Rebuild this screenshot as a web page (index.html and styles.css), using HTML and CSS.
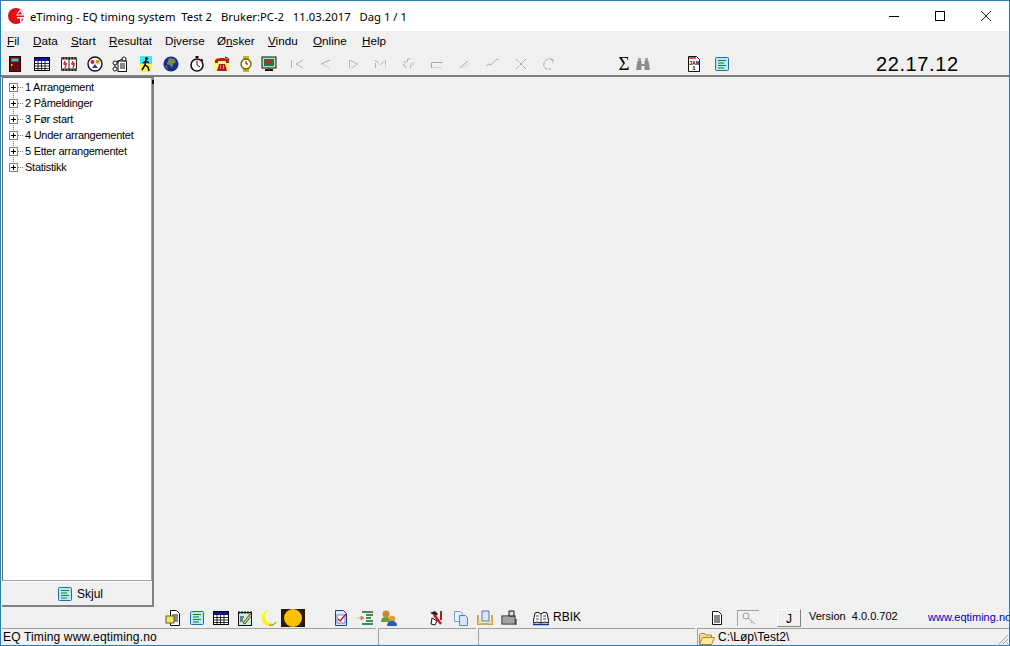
FILE: index.html
```html
<!DOCTYPE html>
<html lang="no">
<head>
<meta charset="utf-8">
<title>eTiming</title>
<link rel="stylesheet" href="styles.css">
</head>
<body>
<svg class="defs" width="0" height="0">
  <defs>
    <symbol id="doc-list" viewBox="0 0 16 16"><rect x="1.500" y="1.500" width="13" height="13" rx="1" fill="#bfe6f5" stroke="#1c6fa8"/><path d="M4 4.500h8M4 7h6M4 9.500h8M4 12h6" stroke="#0a8a2a" stroke-width="1.200"/></symbol>
    <symbol id="table" viewBox="0 0 16 16"><rect x=".5" y="1.500" width="15" height="13" fill="#fff" stroke="#000"/><rect x="1" y="2" width="14" height="3" fill="#0a1a8c"/><path d="M1 7.500h14M1 10h14M1 12.500h14M4 5v9M7.500 5v9M11 5v9" stroke="#000" stroke-width=".8"/></symbol>
  </defs>
</svg>
<div class="window">
  <header class="titlebar">
    <svg class="logo" width="16" height="16" viewBox="0 0 16 16"><circle cx="8" cy="8" r="8" fill="#e0101a"/><path d="M8 7.500L12 1.500A8 8 0 0 1 16 7.500z" fill="#fff"/><path d="M9 6.500L12.500 3.500A6 6 0 0 1 14 6.500z" fill="#e0101a"/><path d="M9 9h7v1.500h-2.500V14H12v-3.500H9z" fill="#fff"/></svg>
    <span class="title-text">eTiming - EQ timing system&nbsp; Test 2&nbsp; &nbsp;Bruker:PC-2&nbsp; &nbsp;11.03.2017&nbsp; &nbsp;Dag 1 / 1</span>
    <div class="win-controls">
      <svg width="46" height="30" viewBox="0 0 46 30"><path d="M18 15.500h10" stroke="#000"/></svg>
      <svg width="46" height="30" viewBox="0 0 46 30"><rect x="18.500" y="10.500" width="9" height="9" fill="none" stroke="#000"/></svg>
      <svg width="46" height="30" viewBox="0 0 46 30"><path d="M18 10l10 10M28 10l-10 10" stroke="#222" fill="none"/></svg>
    </div>
  </header>

  <nav class="menubar">
    <span class="m-fil"><u>F</u>il</span>
    <span class="m-data"><u>D</u>ata</span>
    <span class="m-start"><u>S</u>tart</span>
    <span class="m-res"><u>R</u>esultat</span>
    <span class="m-div">D<u>i</u>verse</span>
    <span class="m-ons">Ø<u>n</u>sker</span>
    <span class="m-vin"><u>V</u>indu</span>
    <span class="m-onl"><u>O</u>nline</span>
    <span class="m-hel"><u>H</u>elp</span>
  </nav>

  <div class="toolbar">
    <div class="tool-group main-tools">
      <svg class="ico wide-next" viewBox="0 0 16 16"><rect x="2" y="0" width="12" height="16" fill="#6b0a12"/><rect x="2.500" y=".5" width="11" height="15" fill="none" stroke="#2a0408"/><rect x="4.500" y="2.500" width="7" height="3" fill="#35c8c8"/><rect x="4" y="8" width="1.500" height="2" fill="#d8c040"/></svg>
      <svg class="ico wide-next" viewBox="0 0 16 16"><use href="#table"/></svg>
      <svg class="ico" viewBox="0 0 16 16"><rect y="1" width="16" height="14" fill="#fff"/><rect y="1" width="16" height="2.500" fill="#222"/><rect y="12.500" width="16" height="2.500" fill="#222"/><path d="M0 2h16M0 14h16" stroke="#fff" stroke-width=".7" stroke-dasharray="1.500 1.500"/><rect x="0" y="3" width="1" height="10" fill="#222"/><rect x="7.500" y="3" width="1" height="10" fill="#222"/><rect x="15" y="3" width="1" height="10" fill="#222"/><path d="M4 5l-1 3 2 1-1 3M4 7l2 1M4 7l-2 1M12 5l-1 3 2 1-1 3M12 7l2 1M12 7l-2 1" stroke="#d8141c" stroke-width="1.300" fill="none"/></svg>
      <svg class="ico" viewBox="0 0 16 16"><circle cx="8" cy="8" r="7" fill="#fff" stroke="#111" stroke-width="1.400"/><circle cx="5.500" cy="6" r="2" fill="#c8202c"/><rect x="9" y="4" width="3.500" height="3.500" fill="#b89a20"/><path d="M8 8l3 4H5z" fill="#2a3ca8"/></svg>
      <svg class="ico" viewBox="0 0 16 16"><rect x="6" y="5" width="8.500" height="10.500" fill="#fff" stroke="#111"/><path d="M8 8h5M8 10h5M8 12h5" stroke="#111"/><circle cx="12" cy="3" r="2" fill="#fff" stroke="#111"/><circle cx="3" cy="7" r="2" fill="#fff" stroke="#111"/><circle cx="3" cy="13" r="2" fill="#fff" stroke="#111"/><path d="M4.500 6l6-3M3 9v2" stroke="#111"/></svg>
      <svg class="ico narrow runner" viewBox="0 0 12 16"><rect width="12" height="8" fill="#3fe8ee"/><rect y="8" width="12" height="8" fill="#fff34a"/><circle cx="6.500" cy="2.500" r="1.500" fill="#000"/><path d="M6 4l-1 5-3 5M5 9l3 2 1 4M6 5l3 2M6 5L3 7" stroke="#000" stroke-width="1.500" fill="none"/></svg>
      <svg class="ico" viewBox="0 0 16 16"><circle cx="8" cy="8" r="7.600" fill="#1a2f96"/><path d="M6 2l5 1 2 3-3 2-1 4-2-3-3-1 1-3z" fill="#7c8a48"/><path d="M2 9l2 1 1 3-2-1z" fill="#6a7c40"/></svg>
      <svg class="ico" viewBox="0 0 16 16"><circle cx="8" cy="9" r="6" fill="#fff" stroke="#111" stroke-width="1.600"/><rect x="6.500" y="0" width="3" height="2" fill="#111"/><path d="M12 3l2 2" stroke="#111" stroke-width="1.400"/><path d="M8 9V4.500" stroke="#d8141c" stroke-width="1.200"/><path d="M8 9l3 2" stroke="#111"/></svg>
      <svg class="ico" viewBox="0 0 16 16"><rect y="2" width="16" height="13" fill="#fff46a" opacity=".8"/><path d="M1 5q0-3 7-3t7 3v2h-3V5H4v2H1z" fill="#b01a20"/><path d="M3 15l2-7h6l2 7z" fill="#b01a20"/><path d="M6 10h1M9 10h1M6 12h1M9 12h1" stroke="#fff"/><path d="M11 1q3 0 4 3" stroke="#222" fill="none"/></svg>
      <svg class="ico narrow" viewBox="0 0 12 16"><rect x="3" y="0" width="6" height="3" fill="#c8b020"/><rect x="3" y="13" width="6" height="3" fill="#c8b020"/><circle cx="6" cy="8" r="5" fill="#fffbd0" stroke="#6a5c10" stroke-width="1.300"/><path d="M6 5v3h2" stroke="#222" fill="none"/></svg>
      <svg class="ico" viewBox="0 0 16 16"><rect x="1" y="1" width="14" height="11" fill="#c4d8c4" stroke="#111"/><rect x="3" y="3" width="10" height="7" fill="#1a7a3a"/><rect x="5" y="4.500" width="5" height="3" fill="#c8242c"/><path d="M4 14h8" stroke="#111" stroke-width="2"/><path d="M7 12h2v2H7z" fill="#444"/></svg>
    </div>
    <div class="tool-group off-tools">
      <svg class="ico" viewBox="0 0 16 16"><path d="M2.500 12V4.500h1M14 4L7 8l7 4" stroke="#b4b4b4" fill="none"/></svg>
      <svg class="ico" viewBox="0 0 16 16"><path d="M13 4L4 8" stroke="#a4a4a4" fill="none"/><path d="M4 8l9 4" stroke="#d0d0d0" fill="none"/></svg>
      <svg class="ico" viewBox="0 0 16 16"><path d="M4.500 12V4l8 4-6 4" stroke="#b4b4b4" fill="none"/></svg>
      <svg class="ico" viewBox="0 0 16 16"><path d="M2.500 12V4.500l5 4 5-4v7" stroke="#b0b0b0" fill="none" stroke-dasharray="5 1.500"/></svg>
      <svg class="ico" viewBox="0 0 16 16"><path d="M6.500 3v3H3v5h3M6.500 3h3M13 6v1M9.500 12V8h4" stroke="#b0b0b0" fill="none" stroke-dasharray="3 1"/></svg>
      <svg class="ico" viewBox="0 0 16 16"><path d="M2.500 12V6.500h11" stroke="#a4a4a4" fill="none"/><path d="M3 11.500h10" stroke="#d4d4d4"/></svg>
      <svg class="ico" viewBox="0 0 16 16"><path d="M3 12l8-7" stroke="#a8a8a8" fill="none"/><path d="M6 12l7-5" stroke="#d4d4d4" fill="none"/></svg>
      <svg class="ico" viewBox="0 0 16 16"><path d="M1 10l3-2 2 1 6-6 2 1" stroke="#b0b0b0" fill="none"/></svg>
      <svg class="ico" viewBox="0 0 16 16"><path d="M3 3l10 10M13 3L3 13" stroke="#a8a8a8" fill="none" stroke-dasharray="4 1"/></svg>
      <svg class="ico" viewBox="0 0 16 16"><path d="M12 4Q7 1 4 5t1 8h5M10 3l3 2-2 2" stroke="#a8a8a8" fill="none" stroke-dasharray="4 1"/></svg>
    </div>
    <div class="tool-group find-tools">
      <span class="sigma">Σ</span>
      <svg class="ico" viewBox="0 0 16 16"><path d="M1 14l1.500-9h4v3h3V5h4l1.500 9H9.500V10h-3v4z" fill="#8c8c8c"/><rect x="3" y="2" width="3" height="3" fill="#a0a0a0"/><rect x="10" y="2" width="3" height="3" fill="#a0a0a0"/></svg>
    </div>
    <div class="tool-group doc-tools">
      <svg class="ico" viewBox="0 0 16 16"><path d="M2.500.5h8l3 3v12h-11z" fill="#fff" stroke="#111"/><path d="M3 2h7" stroke="#d8141c" stroke-width="1.500"/><text class="cal-text" x="8" y="8.500" text-anchor="middle">JAN</text><text class="cal-text" x="8" y="14" text-anchor="middle">1</text></svg>
      <svg class="ico" viewBox="0 0 16 16"><use href="#doc-list"/></svg>
    </div>
    <span class="clock">22.17.12</span>
  </div>

  <main class="workspace">
    <aside class="side-panel">
      <ul class="tree">
        <li><svg class="tree-box" viewBox="0 0 9 9"><rect x=".5" y=".5" width="8" height="8" fill="#fff" stroke="#808080"/><path d="M2 4.500h5M4.500 2v5" stroke="#000"/></svg><span>1 Arrangement</span></li>
        <li><svg class="tree-box" viewBox="0 0 9 9"><rect x=".5" y=".5" width="8" height="8" fill="#fff" stroke="#808080"/><path d="M2 4.500h5M4.500 2v5" stroke="#000"/></svg><span>2 Påmeldinger</span></li>
        <li><svg class="tree-box" viewBox="0 0 9 9"><rect x=".5" y=".5" width="8" height="8" fill="#fff" stroke="#808080"/><path d="M2 4.500h5M4.500 2v5" stroke="#000"/></svg><span>3 Før start</span></li>
        <li><svg class="tree-box" viewBox="0 0 9 9"><rect x=".5" y=".5" width="8" height="8" fill="#fff" stroke="#808080"/><path d="M2 4.500h5M4.500 2v5" stroke="#000"/></svg><span>4 Under arrangementet</span></li>
        <li><svg class="tree-box" viewBox="0 0 9 9"><rect x=".5" y=".5" width="8" height="8" fill="#fff" stroke="#808080"/><path d="M2 4.500h5M4.500 2v5" stroke="#000"/></svg><span>5 Etter arrangementet</span></li>
        <li class="last"><svg class="tree-box" viewBox="0 0 9 9"><rect x=".5" y=".5" width="8" height="8" fill="#fff" stroke="#808080"/><path d="M2 4.500h5M4.500 2v5" stroke="#000"/></svg><span>Statistikk</span></li>
      </ul>
      <div class="hide-btn"><svg class="ico" viewBox="0 0 16 16"><use href="#doc-list"/></svg><span>Skjul</span></div>
    </aside>
    <div class="content"></div>
  </main>

  <div class="bottombar">
    <div class="tool-group b1">
      <svg class="ico" viewBox="0 0 16 16"><path d="M5.500.5h6l3 3v12h-9z" fill="#fff" stroke="#111"/><path d="M7 5h6M7 7h6M7 9h6M7 11h6" stroke="#111"/><rect x="1" y="6" width="8" height="7" fill="#f4e46a" stroke="#6a5c10"/></svg>
      <svg class="ico" viewBox="0 0 16 16"><use href="#doc-list"/></svg>
      <svg class="ico" viewBox="0 0 16 16"><use href="#table"/></svg>
      <svg class="ico" viewBox="0 0 16 16"><rect x="1.500" y="2.500" width="13" height="13" fill="#bff0ee" stroke="#111"/><path d="M2 1v3M5 1v3M8 1v3M11 1v3M14 1v3" stroke="#111"/><path d="M3 7h4M3 9h3M3 11h3" stroke="#111"/><path d="M6 13l7-9 2 1-7 9z" fill="#e8d040" stroke="#111" stroke-width=".7"/></svg>
      <svg class="ico" viewBox="0 0 16 16"><path d="M8 0a8 8 0 1 0 8 11q-2 3-6 2Q4 12 4 7q0-4 4-7z" fill="#fdf21a"/><path d="M8 15q5 1 7-3" stroke="#777" fill="none"/></svg>
      <svg class="ico sun" viewBox="0 0 24 18"><rect width="24" height="18" fill="#2a1a08"/><circle cx="12" cy="9" r="9" fill="#fcc000"/></svg>
    </div>
    <div class="tool-group b2">
      <svg class="ico" viewBox="0 0 16 16"><path d="M2.500.5h8l3 3v12h-11z" fill="#e0e8f8" stroke="#1a3c9c"/><rect x="4" y="5" width="8" height="8" fill="#fff" stroke="#1a3c9c" stroke-width=".6"/><path d="M5 9l2 2 6-7" stroke="#d8141c" stroke-width="1.500" fill="none"/></svg>
      <svg class="ico" viewBox="0 0 16 16"><path d="M5 2h11M9 5h7M9 8h5M9 11h7M5 14h11" stroke="#0d6a1a" stroke-width="1.500"/><path d="M0 8h4V6l3 2-3 2V8" fill="#e08030" stroke="#c05810" stroke-width=".5"/></svg>
      <svg class="ico" viewBox="0 0 16 16"><circle cx="5" cy="4" r="3.500" fill="#c88a30"/><path d="M0 12q0-5 5-5t5 5z" fill="#6a9c30"/><circle cx="11" cy="9" r="3.200" fill="#e09a40"/><path d="M6 16q0-5 5-5t5 5z" fill="#2a5cc0"/></svg>
    </div>
    <div class="tool-group b3">
      <svg class="ico" viewBox="0 0 16 16"><path d="M1 3l5-2 3 3-2 2z" fill="#222"/><path d="M5 5l7 9" stroke="#d8141c" stroke-width="2.500"/><path d="M3 8l-1 6 4 1 2-4z" fill="#fff" stroke="#111"/><path d="M12 1v9" stroke="#b01a20" stroke-width="2"/></svg>
      <svg class="ico" viewBox="0 0 16 16"><path d="M1.500 1.500h6l2 2v8h-8z" fill="#e8f0fa" stroke="#7a9cc8"/><path d="M6.500 5.500h6l2 2v8h-8z" fill="#d4e6f8" stroke="#5a84b8"/></svg>
      <svg class="ico" viewBox="0 0 16 16"><path d="M5 1h7v10H5z" fill="#d8e6f8" stroke="#4a74a8"/><path d="M1 5v10M15 5v10M1 14h14" stroke="#c09020" stroke-width="1.500"/><path d="M1 11h3v3H1zM12 11h3v3h-3z" fill="#f0d070"/></svg>
      <svg class="ico" viewBox="0 0 16 16"><rect x="1" y="6" width="13" height="8" fill="#eee" stroke="#111"/><path d="M2 8h11M2 10h11M2 12h11" stroke="#111" stroke-width=".7"/><path d="M8 1h5v5H8z" fill="#ddd" stroke="#111"/><path d="M15 9v6" stroke="#111"/></svg>
    </div>
    <div class="rbik">
      <svg class="ico" viewBox="0 0 16 16"><path d="M8 4Q5 1 2 3L0 13q4-2 8 0 4-2 8 0L14 3q-3-2-6 1z" fill="#fff" stroke="#111"/><path d="M8 4v9M3 6h3M3 9h3M10 6h3M10 9h3" stroke="#111" stroke-width=".8"/><path d="M0 14.500h16" stroke="#1a2f96" stroke-width="1.500"/></svg>
      <span>RBIK</span>
    </div>
    <svg class="ico note" viewBox="0 0 16 16"><path d="M3.500 1.500h6l3 3v10h-9z" fill="#fff" stroke="#111"/><path d="M5 6h6M5 8h6M5 10h6M5 12h6" stroke="#111"/></svg>
    <div class="key-btn"><svg width="20" height="14" viewBox="0 0 20 14"><circle cx="7" cy="5" r="3" fill="none" stroke="#999"/><path d="M9 7l7 6M13 10l-1 2" stroke="#aaa"/></svg></div>
    <div class="j-btn">J</div>
    <span class="version">Version&nbsp; 4.0.0.702</span>
    <span class="web">www.eqtiming.no</span>
  </div>

  <footer class="statusbar">
    <div class="st st1">EQ Timing www.eqtiming.no</div>
    <div class="st st2"></div>
    <div class="st st3"></div>
    <div class="st st4">
      <svg class="folder" width="16" height="13" viewBox="0 0 16 13"><path d="M.5 12.500V2.500l1-1h4l1 1.500h6v2" fill="#f4dc80" stroke="#a88a30"/><path d="M.5 12.500l3-7h12l-3 7z" fill="#fcec9c" stroke="#a88a30"/></svg>
      <span>C:\Løp\Test2\</span>
      <svg class="grip" width="12" height="12" viewBox="0 0 12 12"><path d="M11 2L2 11M11 6l-5 5M11 10l-1 1" stroke="#a0a0a0"/></svg>
    </div>
  </footer>
</div>
</body>
</html>
```

FILE: styles.css
```css
* { box-sizing: border-box; }
html, body { margin: 0; padding: 0; height: 100%; overflow: hidden; }
body { font-family: "Liberation Sans", Arial, sans-serif; font-size: 12px; color: #000; background: #f0f0f0; }
.defs { display: block; height: 0; }
.window { width: 1010px; height: 646px; display: flex; flex-direction: column; overflow: hidden; border: 1px solid #2b7cb3; background: #f0f0f0; }
.ico { width: 16px; height: 16px; flex: none; display: block; }
.ico.narrow { width: 12px; }
.ico.runner { margin: 0 2px; }
.ico.sun { width: 24px; height: 18px; margin-left: -4px; }
.cal-text { font-family: "Liberation Mono", monospace; font-size: 5.500px; font-weight: 700; fill: #111; }

.titlebar { height: 30px; background: #fff; display: flex; align-items: center; padding-left: 7px; flex: none; }
.logo { flex: none; margin-right: 6px; }
.title-text { font-family: "Noto Sans", sans-serif; font-size: 11.300px; white-space: pre; }
.win-controls { margin-left: auto; display: flex; }
.win-controls svg { display: block; }

.menubar { height: 20px; flex: none; display: flex; align-items: center; padding: 0 0 2px 6px; font-size: 11.700px; }
.menubar span { display: block; }
.m-fil { width: 26px; }
.m-data { width: 38px; }
.m-start { width: 38px; }
.m-res { width: 56px; }
.m-div { width: 52px; }
.m-ons { width: 51px; }
.m-vin { width: 45px; }
.m-onl { width: 49px; }

.toolbar { height: 26px; flex: none; display: flex; align-items: center; padding: 1px 0 0 6px; border-bottom: 2px solid #808080; }
.tool-group { display: flex; align-items: center; flex: none; }
.main-tools { gap: 9.500px; width: 282px; }
.main-tools .wide-next { margin-right: 1.500px; }
.off-tools { gap: 12px; width: 327px; }
.sigma { font-family: "Liberation Serif", serif; font-size: 19px; width: 16px; text-align: center; line-height: 16px; }
.find-tools { gap: 3px; width: 70px; }
.doc-tools { gap: 12px; width: 190px; }
.clock { font-family: "Liberation Sans", sans-serif; font-size: 20px; letter-spacing: .6px; line-height: 20px; flex: none; }

.workspace { flex: 1; min-height: 0; display: flex; }
.side-panel { width: 152px; margin-left: 1px; display: flex; flex-direction: column; border-right: 2px solid #808080; border-bottom: 2px solid #808080; flex: none; position: relative; }
.side-panel::after { content: ""; position: absolute; right: -2px; top: 3px; width: 2px; height: 4px; background: #000; }
.tree { flex: 1; list-style: none; margin: 0; padding: 1px 0 0 0; background: #fff; border: 1px solid #a0a0a0; border-top-color: #696969; border-left-color: #696969; }
.tree li { height: 16px; display: flex; align-items: center; padding-left: 6px; font-size: 11px; letter-spacing: -.25px;
  background-image: repeating-linear-gradient(to bottom, #808080 0 1px, transparent 1px 2px), repeating-linear-gradient(to right, #808080 0 1px, transparent 1px 2px);
  background-repeat: no-repeat; background-position: 10px 0, 15px 8px; background-size: 1px 16px, 6px 1px; }
.tree li:first-child { background-position: 10px 8px, 15px 8px; background-size: 1px 8px, 6px 1px; }
.tree li.last { background-size: 1px 8px, 6px 1px; }
.tree-box { width: 9px; height: 9px; display: block; flex: none; margin-right: 7px; }
.hide-btn { height: 24px; flex: none; display: flex; align-items: center; justify-content: center; gap: 4px; padding-left: 6px; background: #f0f0f0; border-top: 1px solid #fff; }

.content { flex: 1; background: #f0f0f0; }

.bottombar { height: 21px; flex: none; display: flex; align-items: center; padding-left: 164px; }
.b1 { gap: 8px; width: 168px; }
.b2 { gap: 8px; width: 96px; }
.b3 { gap: 8px; width: 104px; }
.rbik { display: flex; align-items: center; gap: 4px; width: 176px; flex: none; }
.rbik span { margin-bottom: 2px; }
.note { margin-right: 12px; }
.key-btn { width: 22px; height: 16px; flex: none; display: flex; align-items: center; justify-content: center; margin-right: 18px; border-top: 1px solid #a0a0a0; border-left: 1px solid #a0a0a0; }
.j-btn { width: 24px; height: 18px; flex: none; text-align: center; line-height: 19px; border-right: 1px solid #808080; border-bottom: 1px solid #808080; border-top: 1px solid #fff; border-left: 1px solid #fff; margin-right: 8px; }
.version { width: 119px; flex: none; white-space: nowrap; font-size: 11px; margin-bottom: 4px; }
.web { color: #0000c0; flex: none; white-space: nowrap; font-size: 11px; margin-bottom: 2px; }

.statusbar { height: 17px; flex: none; display: flex; gap: 2px; padding-left: 1px; }
.st { border-top: 1px solid #a0a0a0; border-left: 1px solid #a0a0a0; white-space: nowrap; line-height: 16px; font-size: 12px; }
.st1 { width: 374px; border-left: none; letter-spacing: .15px; padding-left: 1px; }
.st2 { width: 98px; }
.st3 { width: 217px; }
.st4 { flex: 1; display: flex; align-items: center; }
.folder { flex: none; margin: 2px 3px 0 1px; }
.grip { margin-left: auto; align-self: flex-end; }
```
